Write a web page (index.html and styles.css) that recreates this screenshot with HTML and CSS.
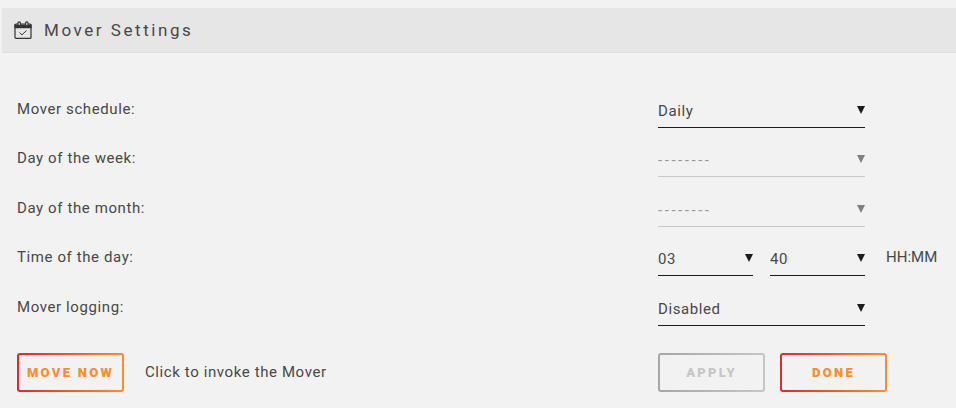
FILE: index.html
```html
<!DOCTYPE html>
<html lang="en">
<head>
  <meta charset="UTF-8">
  <title>Mover Settings</title>
  <link rel="stylesheet" href="styles.css">
</head>
<body>
  <div class="title">
    <svg class="title-icon" width="20" height="20" viewBox="0 0 20 20" fill="none" stroke="#333" stroke-width="1.2">
      <rect x="2" y="4" width="16" height="14.4" rx="1"/>
      <path d="M2 5h16v2.6H2z" fill="#333"/>
      <rect x="5" y="1.8" width="2.4" height="4" rx="1.2" fill="#e6e6e6"/>
      <rect x="12.6" y="1.8" width="2.4" height="4" rx="1.2" fill="#e6e6e6"/>
      <path d="M6.5 12.5l2.4 2.4 4.6-4.4" stroke-width="1"/>
    </svg>
    <span>Mover Settings</span>
  </div>

  <div class="form">
    <div class="row">
      <span class="label">Mover schedule:</span>
      <div class="fields">
        <div class="pick wide"><select><option>Daily</option></select></div>
      </div>
    </div>
    <div class="row">
      <span class="label">Day of the week:</span>
      <div class="fields">
        <div class="pick wide off"><select disabled><option>--------</option></select></div>
      </div>
    </div>
    <div class="row">
      <span class="label">Day of the month:</span>
      <div class="fields">
        <div class="pick wide off"><select disabled><option>--------</option></select></div>
      </div>
    </div>
    <div class="row">
      <span class="label">Time of the day:</span>
      <div class="fields">
        <div class="pick small"><select><option>03</option></select></div>
        <div class="pick small"><select><option>40</option></select></div>
        <span class="unit">HH:MM</span>
      </div>
    </div>
    <div class="row">
      <span class="label">Mover logging:</span>
      <div class="fields">
        <div class="pick wide"><select><option>Disabled</option></select></div>
      </div>
    </div>
    <div class="actions">
      <div class="action-left">
        <button class="btn">Move Now</button>
        <span class="hint">Click to invoke the Mover</span>
      </div>
      <div class="fields action-right">
        <button class="btn grey" disabled>Apply</button>
        <button class="btn">Done</button>
      </div>
    </div>
  </div>
</body>
</html>
```

FILE: styles.css
```css
*, *::before, *::after {
  box-sizing: border-box;
}

body {
  margin: 0;
  padding-top: 8px;
  background-color: #f2f2f2;
  color: #484848;
  font-family: Roboto, "Noto Sans", sans-serif;
  font-size: 15px;
  letter-spacing: 0.6px;
  height: 408px;
  overflow: hidden;
}

.title {
  display: flex;
  align-items: center;
  height: 45px;
  margin-left: 2px;
  padding-left: 11px;
  background-color: #e6e6e6;
  border-bottom: 1px solid #e0e0e0;
  font-size: 17px;
  letter-spacing: 2.55px;
}

.title-icon {
  margin-right: 11px;
}

.form {
  padding: 31px 0 0 17px;
}

.row {
  display: flex;
  height: 49.4px;
}

.label {
  width: 641px;
  padding-top: 15px;
  line-height: 20px;
}

.fields {
  display: flex;
  gap: 15px;
}

.pick {
  position: relative;
  height: 33px;
  margin-top: 11px;
}

.pick::after {
  content: "";
  position: absolute;
  right: 0;
  top: 11px;
  border-left: 4px solid transparent;
  border-right: 4px solid transparent;
  border-top: 8px solid #1c1c1c;
  pointer-events: none;
}

.pick select {
  appearance: none;
  display: block;
  width: 100%;
  height: 100%;
  padding: 0;
  background: none;
  border: 0;
  border-bottom: 1px solid #1c1c1c;
  border-radius: 0;
  color: #484848;
  font: inherit;
  letter-spacing: inherit;
}

.wide {
  width: 207px;
}

.small {
  width: 95px;
}

.small + .small {
  margin-left: 2px;
}

.off::after {
  border-top-color: #808080;
}

.off select {
  border-bottom-color: #c8c8c8;
  color: #999;
  letter-spacing: 2.55px;
  opacity: 1;
}

.unit {
  margin-left: 6px;
  padding-top: 15px;
  line-height: 20px;
  letter-spacing: 0;
}

.actions {
  display: flex;
  margin-top: 22px;
}

.action-left {
  display: flex;
  align-items: center;
  gap: 21px;
  width: 641px;
}

.btn {
  width: 107px;
  height: 39px;
  padding: 0;
  border: 2px solid transparent;
  border-radius: 3px;
  background: linear-gradient(#f2f2f2, #f2f2f2) padding-box,
    linear-gradient(90deg, #e22828, #ff8c2f) border-box;
  color: #ff8c2f;
  font: 900 13px Roboto, sans-serif;
  letter-spacing: 2.3px;
  text-transform: uppercase;
}

.btn.grey {
  background: linear-gradient(#f2f2f2, #f2f2f2) padding-box,
    linear-gradient(90deg, #a6a6a6, #c6c6c6) border-box;
  color: #c6c6c6;
}
```
